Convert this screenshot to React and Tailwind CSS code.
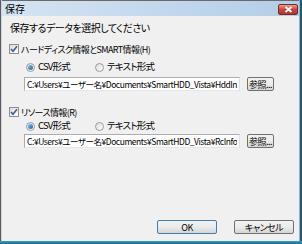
import React from "react";

const font = {
  fontFamily: '"Noto Sans CJK JP", "Liberation Sans", sans-serif',
  fontFeatureSettings: '"palt"',
};

function Check({ label }) {
  return (
    <div className="flex items-center h-[12px] gap-[2px]">
      <span className="w-[10px] h-[10px] border border-[#8f8f8f] bg-gradient-to-br from-[#dcdcdc] to-white flex items-center justify-center">
        <svg width="8" height="8" viewBox="0 0 8 8">
          <path d="M1 4 L3 6.2 L7 1.2" stroke="#3a5e99" strokeWidth="1.6" fill="none" />
        </svg>
      </span>
      <span className="text-[9px] leading-none text-black tracking-[-0.6px]">{label}</span>
    </div>
  );
}

function Radio({ label, on }) {
  return (
    <div className="flex items-center gap-[3px] h-[12px]">
      <span className="w-[9px] h-[9px] rounded-full border border-[#9a9a9a] bg-gradient-to-br from-[#dcdcdc] to-white flex items-center justify-center">
        {on && <span className="w-[5px] h-[5px] rounded-full bg-gradient-to-br from-[#7fc4f0] to-[#1b5fa0]" />}
      </span>
      <span className="text-[9.5px] leading-none text-black tracking-[-0.8px]">{label}</span>
    </div>
  );
}

function Btn({ children, main, w }) {
  return (
    <div
      className={`h-[14px] ${w} rounded-[2px] border ${main ? "border-[#3c7fb1]" : "border-[#707070]"} bg-gradient-to-b from-[#f2f2f2] via-[#ebebeb] to-[#d5d5d5] flex items-center justify-center text-[9px] leading-none text-black tracking-[-0.5px]`}
    >
      {children}
    </div>
  );
}

function PathRow({ value }) {
  return (
    <div className="flex items-center pl-[15px] gap-[7px]">
      <div className="w-[216px] h-[14px] bg-white border border-[#abadb3] border-r-[#dbdfe6] border-b-[#e3e9ef] flex items-center px-[2px] overflow-hidden">
        <span className="block w-full overflow-hidden text-[8.5px] leading-[11px] whitespace-nowrap tracking-[-0.45px]">{value}</span>
      </div>
      <Btn w="w-[27px]">参照...</Btn>
    </div>
  );
}

export default function App() {
  return (
    <div style={font} className="w-[302px] h-[244px] flex flex-col bg-[#f0f0f0] overflow-hidden">
      <div className="flex flex-1">
        <div className="w-[2px] border-l border-[#5a5a5a] bg-[#cfd6de]" />
        <div className="flex-1 flex flex-col">
          <div className="h-[16px] border-t border-[#6a6a6a] bg-gradient-to-r from-[#d6e4f2] to-[#b3cde8] flex items-center justify-between pl-[3px] pr-[1px]">
            <span className="text-[10px] leading-none text-black">保存</span>
            <div className="w-[20px] h-[11px] mt-[3px] self-start rounded-[2px] border border-[#7a2a22] bg-gradient-to-b from-[#e59c8e] via-[#c8473a] to-[#b5372a] flex items-center justify-center">
              <svg width="9" height="7" viewBox="0 0 9 7">
                <path d="M1.5 1 L7.5 6 M7.5 1 L1.5 6" stroke="#fff" strokeWidth="1.8" />
              </svg>
            </div>
          </div>
          <div className="flex-1 flex flex-col pl-[7px]">
            <div className="mt-[6px] pl-[1px] h-[12px] flex items-center text-[10px] leading-none tracking-[-0.5px]">保存するデータを選択してください</div>
            <div className="mt-[9px]">
              <Check label="ハードディスク情報とSMART情報(H)" />
            </div>
            <div className="mt-[6px] pl-[17px] flex gap-[25px]">
              <Radio label="CSV形式" on />
              <Radio label="テキスト形式" />
            </div>
            <div className="mt-[4px]">
              <PathRow value="C:¥Users¥ユーザー名¥Documents¥SmartHDD_Vista¥HddInfo.csv" />
            </div>
            <div className="mt-[15px]">
              <Check label="リソース情報(R)" />
            </div>
            <div className="mt-[2px] pl-[17px] flex gap-[25px]">
              <Radio label="CSV形式" on />
              <Radio label="テキスト形式" />
            </div>
            <div className="mt-[2px]">
              <PathRow value="C:¥Users¥ユーザー名¥Documents¥SmartHDD_Vista¥RcInfo.csv" />
            </div>
            <div className="mt-auto mb-[7px] flex justify-end gap-[17px] pr-[5px]">
              <Btn main w="w-[60px]">OK</Btn>
              <Btn w="w-[60px]">キャンセル</Btn>
            </div>
          </div>
        </div>
        <div className="w-[3px] bg-[#1d5c72] border-l border-[#8fb3c8]" />
      </div>
      <div className="h-[3px] bg-gradient-to-b from-[#3aa3c7] to-[#1d6a86]" />
    </div>
  );
}
